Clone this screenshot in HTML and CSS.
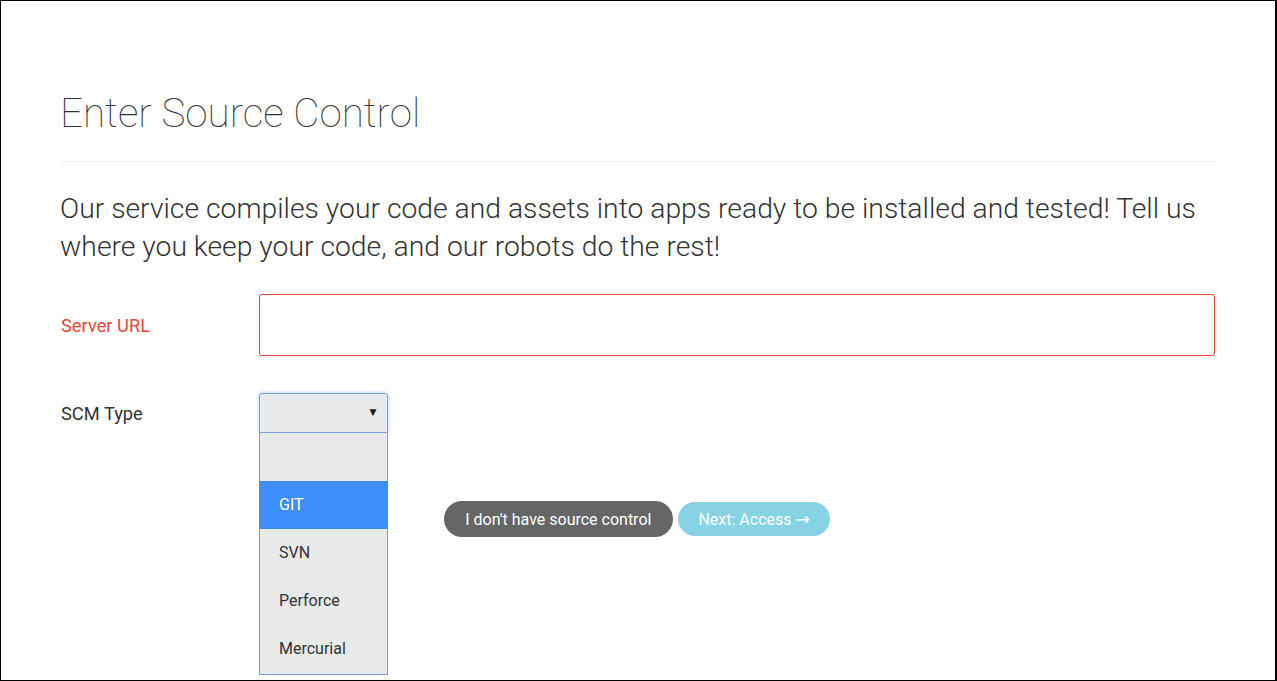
FILE: index.html
```html
<!DOCTYPE html>
<html>
<head>
<meta charset="utf-8">
<link rel="stylesheet" href="styles.css">
</head>
<body>
<div class="page">
  <h1 class="title">Enter Source Control</h1>
  <hr class="rule">
  <p class="lead">Our service compiles your code and assets into apps ready to be installed and tested! Tell us where you keep your code, and our robots do the rest!</p>
  <form class="form">
    <div class="row row-url">
      <label class="label label-error">Server URL</label>
      <div class="field"><div class="input input-error"></div></div>
    </div>
    <div class="row row-scm">
      <label class="label">SCM Type</label>
      <div class="field">
        <div class="select-wrap">
          <div class="select"><span class="caret">&#9660;</span></div>
          <ul class="menu">
            <li class="opt"></li>
            <li class="opt opt-active">GIT</li>
            <li class="opt">SVN</li>
            <li class="opt">Perforce</li>
            <li class="opt">Mercurial</li>
          </ul>
        </div>
      </div>
    </div>
    <div class="actions">
      <button type="button" class="btn btn-dark">I don't have source control</button>
      <button type="button" class="btn btn-info">Next: Access <span class="arrow">&rarr;</span></button>
    </div>
  </form>
</div>
</body>
</html>
```
FILE: styles.css
```css
html, body {
  margin: 0;
  padding: 0;
}
body {
  width: 1277px;
  height: 681px;
  box-sizing: border-box;
  border: 1px solid #000;
  border-right-width: 2px;
  background: #fff;
  font-family: Roboto, "Liberation Sans", sans-serif;
  color: #333;
  overflow: hidden;
}
.page {
  padding: 91px 60px 0 58px;
}
.title {
  margin: 0;
  font-size: 40.4px;
  font-weight: 100;
  line-height: 44px;
  color: #333;
  padding-left: 1px;
}
.rule {
  margin: 25px 0 0 2px;
  border: 0;
  border-top: 1px solid #eee;
}
.lead {
  margin: 28px 0 0 1px;
  font-size: 28.3px;
  font-weight: 300;
  line-height: 38px;
  color: #333;
}
.form {
  margin-top: 28px;
}
.row {
  display: flex;
  align-items: center;
}
.label {
  width: 200px;
  padding-left: 2px;
  box-sizing: border-box;
  font-size: 18.3px;
  color: #333;
}
.label-error {
  color: #e8453c;
}
.field {
  flex: 1;
}
.input {
  height: 60px;
  border: 1px solid #e8453c;
  border-radius: 3px;
  background: #fff;
}
.row-scm {
  margin-top: 37px;
}
.select-wrap {
  position: relative;
  width: 129px;
}
.select {
  height: 40px;
  box-sizing: border-box;
  border: 1px solid #7aa1dc;
  border-radius: 3px 3px 0 0;
  background: #e9eaeb;
  box-shadow: 0 0 4px rgba(102, 175, 233, 0.6);
  position: relative;
}
.caret {
  position: absolute;
  right: 8px;
  top: 11px;
  font-size: 12px;
  color: #222;
}
.menu {
  position: absolute;
  left: 0;
  top: 40px;
  width: 129px;
  box-sizing: border-box;
  margin: 0;
  padding: 0 0 1px;
  list-style: none;
  background: #e9eaeb;
  border: 1px solid #7a9bd6;
  border-top: 0;
  z-index: 2;
}
.opt {
  height: 48px;
  line-height: 48px;
  padding-left: 19px;
  font-size: 16px;
  color: #333;
}
.opt-active {
  background: #3d8ef8;
  color: #fff;
  margin: 0 -1px;
  padding-left: 20px;
}
.actions {
  display: flex;
  justify-content: center;
  align-items: center;
  gap: 5px;
  margin-top: 68px;
}
.btn {
  border: 0;
  border-radius: 18px;
  font-family: Roboto, "Liberation Sans", sans-serif;
  font-size: 16px;
  color: #fff;
  cursor: pointer;
}
.btn-dark {
  background: #666;
  height: 36px;
  padding: 0 21.5px;
}
.btn-info {
  background: #85d3e4;
  height: 34px;
  padding: 0 20.5px;
  border-radius: 17px;
}
.arrow {
  font-family: "DejaVu Sans", sans-serif;
  font-size: 17px;
}
```
